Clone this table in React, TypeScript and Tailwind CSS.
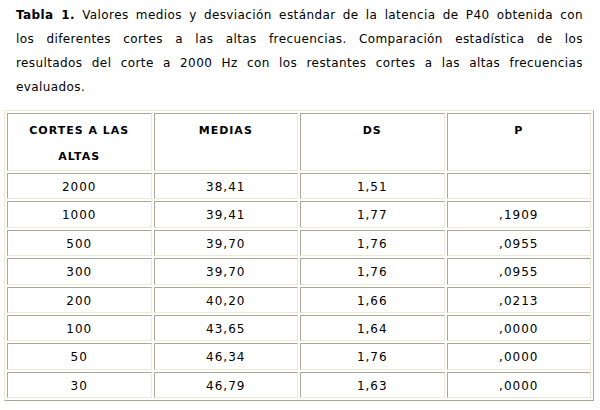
import React from "react";

const rows: string[][] = [
  ["2000", "38,41", "1,51", ""],
  ["1000", "39,41", "1,77", ",1909"],
  ["500", "39,70", "1,76", ",0955"],
  ["300", "39,70", "1,76", ",0955"],
  ["200", "40,20", "1,66", ",0213"],
  ["100", "43,65", "1,64", ",0000"],
  ["50", "46,34", "1,76", ",0000"],
  ["30", "46,79", "1,63", ",0000"],
];

const cell =
  "border border-t-[#aca899] border-l-[#aca899] border-b-[#ece9d8] border-r-[#ece9d8] text-center p-0";

const App = () => {
  return (
    <div className="w-[600px] h-[410px] bg-white text-black font-['DejaVu_Sans',Verdana,sans-serif] text-[12px] tracking-[1px]">
      <div className="pl-4 pr-[17px] pt-[3px] leading-6 tracking-[0.4px]">
        <p className="text-justify [text-align-last:justify] whitespace-nowrap">
          <b>Tabla 1.</b> Valores medios y desviación estándar de la latencia de P40 obtenida con
        </p>
        <p className="text-justify [text-align-last:justify]">
          los diferentes cortes a las altas frecuencias. Comparación estadística de los
        </p>
        <p className="text-justify [text-align-last:justify]">
          resultados del corte a 2000 Hz con los restantes cortes a las altas frecuencias
        </p>
        <p>evaluados.</p>
      </div>
      <table className="ml-1 mt-[11px] w-[590px] table-fixed border-separate border-spacing-[2px] border border-t-[#ece9d8] border-l-[#ece9d8] border-b-[#aca899] border-r-[#aca899]">
        <thead>
          <tr>
            {["CORTES A LAS ALTAS", "MEDIAS", "DS", "P"].map((h) => (
              <th
                key={h}
                className={`${cell} h-[58px] align-top pt-1 leading-[26px] text-[11px] font-bold px-4`}
              >
                {h}
              </th>
            ))}
          </tr>
        </thead>
        <tbody>
          {rows.map((r, i) => (
            <tr key={i}>
              {r.map((v, j) => (
                <td key={j} className={`${cell} h-[26.4px] pt-[3px] leading-[21.4px]`}>
                  {v}
                </td>
              ))}
            </tr>
          ))}
        </tbody>
      </table>
    </div>
  );
};

export default App;
